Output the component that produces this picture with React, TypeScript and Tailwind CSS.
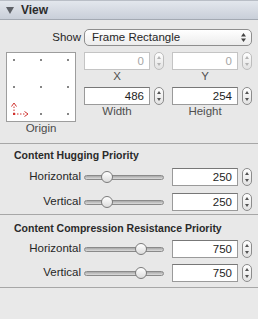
import React from 'react';

function Stepper({ disabled = false }: { disabled?: boolean }) {
  const c = disabled ? '#b4b4b4' : '#555555';
  return (
    <div
      className={`w-[10px] h-[18px] rounded-[5px] border flex flex-col items-center justify-center gap-[4px] bg-gradient-to-b from-white to-[#e2e2e2] ${
        disabled ? 'border-[#bdbdbd]' : 'border-[#8c8c8c]'
      }`}
    >
      <svg width="4" height="3" viewBox="0 0 4 3">
        <path d="M2 0L4 3H0z" fill={c} />
      </svg>
      <svg width="4" height="3" viewBox="0 0 4 3">
        <path d="M0 0H4L2 3z" fill={c} />
      </svg>
    </div>
  );
}

function Field({ value, disabled = false }: { value: string; disabled?: boolean }) {
  return (
    <div
      className={`w-[66px] h-[18px] bg-white border text-right pr-[5px] leading-[16px] text-[11.5px] ${
        disabled
          ? 'border-[#c4c4c4] text-[#a6a6a6]'
          : 'border-[#9a9a9a] border-t-[#777777] text-[#1e1e1e]'
      }`}
    >
      {value}
    </div>
  );
}

function Slider({ knob }: { knob: 'low' | 'high' }) {
  return (
    <div className="relative w-[80px] h-[12px] flex items-center">
      <div className="w-full h-[5px] rounded-full border border-[#8a8a8a] bg-gradient-to-b from-[#a8a8a8] to-[#dcdcdc]" />
      <div
        className={`absolute top-0 w-[12px] h-[12px] rounded-full border border-[#7b7b7b] bg-gradient-to-b from-white to-[#dcdcdc] ${
          knob === 'low' ? 'left-[17px]' : 'left-[51px]'
        }`}
      />
    </div>
  );
}

function PriorityRow({ label, value, knob }: { label: string; value: string; knob: 'low' | 'high' }) {
  return (
    <div className="flex items-center h-[18px]">
      <div className="w-[81px] text-right text-[11.5px] text-[#262626]">{label}</div>
      <div className="ml-[3px]">
        <Slider knob={knob} />
      </div>
      <div className="ml-[8px] flex items-center gap-[4px]">
        <Field value={value} />
        <Stepper />
      </div>
    </div>
  );
}

function OriginDiagram() {
  const pts = [8, 35, 62];
  return (
    <svg width="68" height="68" viewBox="1 1 68 68">
      {pts.map((y) =>
        pts.map((x) =>
          x === 8 && y === 62 ? null : (
            <rect key={`${x}-${y}`} x={x - 0.75} y={y - 0.75} width="1.5" height="1.5" fill="#2a2a2a" />
          )
        )
      )}
      <path d="M8 62V53" stroke="#d0312d" strokeWidth="1" strokeDasharray="1.5 1.5" />
      <path d="M8 62H19" stroke="#d0312d" strokeWidth="1" strokeDasharray="1.5 1.5" />
      <path d="M5.5 54.5L8 51L10.5 54.5" stroke="#d0312d" strokeWidth="1" fill="none" />
      <path d="M18.5 59.5L22 62L18.5 64.5" stroke="#d0312d" strokeWidth="1" fill="none" />
      <rect x="7" y="61" width="2" height="2" fill="#d0312d" />
    </svg>
  );
}

export default function App() {
  return (
    <div className="w-[258px] h-[319px] overflow-hidden bg-[#e8e8e8] font-['Liberation_Sans',Arial,sans-serif] text-[#262626]">
      {/* Header */}
      <div className="h-[20px] flex items-center border-t border-t-[#b9bec6] border-b border-b-[#a3a9b2] bg-gradient-to-b from-[#e3e7ed] to-[#c9cfd9]">
        <svg width="8" height="7" viewBox="0 0 8 7" className="ml-[6px]">
          <path d="M0 0H8L4 7z" fill="#5d6066" />
        </svg>
        <span className="ml-[7px] text-[12px] font-bold text-[#2b2b2b]">View</span>
      </div>

      {/* Show / frame */}
      <div className="pt-[9px] h-[123px]">
        <div className="flex items-center">
          <div className="w-[81px] text-right text-[11.5px]">Show</div>
          <div className="ml-[3px] w-[168px] h-[17px] rounded-[5px] border border-[#8e8e8e] bg-gradient-to-b from-white to-[#ececec] flex items-center justify-between pl-[7px] pr-[5px]">
            <span className="text-[11.5px] leading-none">Frame Rectangle</span>
            <svg width="5" height="9" viewBox="0 0 5 9">
              <path d="M2.5 0L5 3.5H0z" fill="#444" />
              <path d="M0 5.5H5L2.5 9z" fill="#444" />
            </svg>
          </div>
        </div>

        <div className="flex mt-[6px]">
          <div className="ml-[6px] w-[70px] flex flex-col items-center">
            <div className="w-[70px] h-[70px] bg-white border border-[#9d9d9d]">
              <OriginDiagram />
            </div>
            <div className="h-[12px] leading-[12px] text-[11.5px] text-[#4a4a4a]">Origin</div>
          </div>

          <div className="ml-[8px] grid grid-cols-2 gap-x-[8px] content-start">
            {[
              { v: '0', l: 'X', d: true },
              { v: '0', l: 'Y', d: true },
              { v: '486', l: 'Width', d: false },
              { v: '254', l: 'Height', d: false },
            ].map((f) => (
              <div key={f.l} className="flex flex-col">
                <div className="flex items-center gap-[4px]">
                  <Field value={f.v} disabled={f.d} />
                  <Stepper disabled={f.d} />
                </div>
                <div className="w-[66px] text-center h-[17px] leading-[13px] text-[11.5px] text-[#4f4f4f]">{f.l}</div>
              </div>
            ))}
          </div>
        </div>
      </div>

      {/* Content Hugging Priority */}
      <div className="border-t border-[#a7a7a7] pt-[4px] pb-[3px]">
        <div className="pl-[14px] h-[14px] leading-[14px] text-[10.5px] font-bold text-[#2a2a2a]">Content Hugging Priority</div>
        <div className="mt-[6px] flex flex-col gap-[7px]">
          <PriorityRow label="Horizontal" value="250" knob="low" />
          <PriorityRow label="Vertical" value="250" knob="low" />
        </div>
      </div>

      {/* Content Compression Resistance Priority */}
      <div className="border-t border-[#a7a7a7] pt-[6px] pb-[5px]">
        <div className="pl-[14px] h-[14px] leading-[14px] text-[10.5px] font-bold text-[#2a2a2a]">
          Content Compression Resistance Priority
        </div>
        <div className="mt-[5px] flex flex-col gap-[6px]">
          <PriorityRow label="Horizontal" value="750" knob="high" />
          <PriorityRow label="Vertical" value="750" knob="high" />
        </div>
      </div>

      <div className="border-t border-[#a7a7a7] h-full bg-[#e9e9e9]" />
    </div>
  );
}
